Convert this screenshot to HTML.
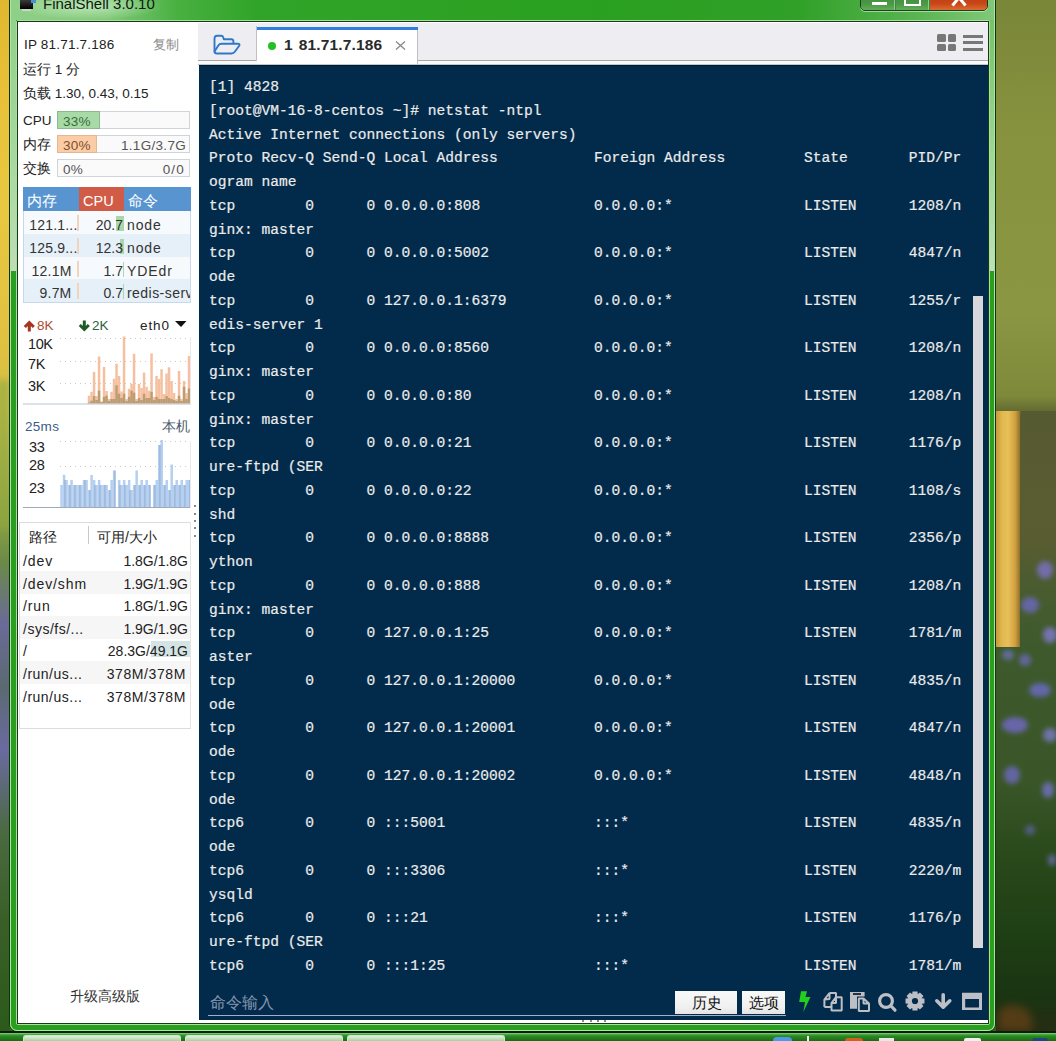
<!DOCTYPE html>
<html><head><meta charset="utf-8">
<style>
*{margin:0;padding:0;box-sizing:border-box}
html,body{width:1056px;height:1041px;overflow:hidden;position:relative;background:#3a5a2a;font-family:"Liberation Sans",sans-serif}
.a{position:absolute}
.t{position:absolute;white-space:nowrap;line-height:16px}
pre{position:absolute;left:209px;top:76px;font-family:"Liberation Mono",monospace;font-size:14.58px;line-height:23.75px;color:#ececec;white-space:pre;-webkit-text-stroke:0.2px #e8e8e8}
</style></head><body>
<div class="a" style="left:0;top:0;width:9px;height:1041px;background:linear-gradient(180deg,#e0b830 0%,#e8c038 8%,#e8c840 20%,#e0c040 34%,#c8c048 40%,#a8b048 45%,#8aa040 50%,#6a8a48 54%,#6a6a98 60%,#5a6a70 66%,#6a6aa0 72%,#4a6a40 80%,#3a6028 88%,#2a5a1a 100%)"></div>
<div class="a" style="left:996px;top:0;width:60px;height:1041px;background:linear-gradient(180deg,#7a8638 0%,#86923e 12%,#8a9642 30%,#7e8a3a 38%,#5c6030 40%,#585c30 52%,#4a5c30 56%,#3e5a2c 62%,#3a5628 75%,#2a4a1c 82%,#1e3e14 90%,#1a3412 96%,#2a2a12 100%)"></div>
<div class="a" style="left:1037px;top:561px;width:16px;height:18px;border-radius:50%;background:#7a70c0;filter:blur(2.5px);opacity:0.85"></div>
<div class="a" style="left:1021px;top:597px;width:18px;height:16px;border-radius:50%;background:#6a68b8;filter:blur(2.5px);opacity:0.85"></div>
<div class="a" style="left:1043px;top:627px;width:14px;height:16px;border-radius:50%;background:#8078c8;filter:blur(2.5px);opacity:0.85"></div>
<div class="a" style="left:1002px;top:650px;width:12px;height:10px;border-radius:50%;background:#6a70b0;filter:blur(2.5px);opacity:0.85"></div>
<div class="a" style="left:1029px;top:683px;width:22px;height:14px;border-radius:50%;background:#6a6ac0;filter:blur(2.5px);opacity:0.85"></div>
<div class="a" style="left:1002px;top:717px;width:26px;height:16px;border-radius:50%;background:#7068c0;filter:blur(2.5px);opacity:0.85"></div>
<div class="a" style="left:1043px;top:728px;width:14px;height:14px;border-radius:50%;background:#7a78c0;filter:blur(2.5px);opacity:0.85"></div>
<div class="a" style="left:1004px;top:766px;width:16px;height:18px;border-radius:50%;background:#6a68b8;filter:blur(2.5px);opacity:0.85"></div>
<div class="a" style="left:1042px;top:782px;width:12px;height:16px;border-radius:50%;background:#7070c0;filter:blur(2.5px);opacity:0.85"></div>
<div class="a" style="left:1019px;top:654px;width:12px;height:12px;border-radius:50%;background:#6a68b0;filter:blur(2.5px);opacity:0.85"></div>
<div class="a" style="left:1025px;top:825px;width:10px;height:10px;border-radius:50%;background:#5a6098;filter:blur(2.5px);opacity:0.85"></div>
<div class="a" style="left:1048px;top:854px;width:8px;height:12px;border-radius:50%;background:#6a68a8;filter:blur(2.5px);opacity:0.85"></div>
<div class="a" style="left:996px;top:411px;width:24px;height:236px;background:linear-gradient(90deg,#c89838 0%,#e0b850 25%,#e8c058 50%,#d0a040 80%,#907028 100%)"></div>
<div class="a" style="left:1021px;top:411px;width:35px;height:150px;background:linear-gradient(180deg,#565a30,#5a5c32 60%,rgba(80,90,48,0))"></div>
<div class="a" style="left:998px;top:1005px;width:34px;height:26px;border-radius:40% 60% 0 0;background:#6a4218;filter:blur(4px);opacity:0.7"></div>
<div class="a" style="left:-4px;top:380px;width:14px;height:150px;background:#90a840;filter:blur(3px);opacity:0.6"></div>
<div class="a" style="left:9px;top:-20px;width:987px;height:1052px;border:1px solid #123012;border-radius:0 0 8px 8px;background:#2a9e1e"></div>
<div class="a" style="left:10px;top:-20px;width:985px;height:1051px;border:1px solid #a8e8a0;border-top:none;border-radius:0 0 7px 7px"></div>
<div class="a" style="left:11px;top:0;width:5px;height:271px;background:linear-gradient(180deg,#8ed088 0%,#a8d8a0 60%,#c0dcb8 100%)"></div>
<div class="a" style="left:989px;top:0;width:5px;height:271px;background:linear-gradient(180deg,#70c060 0%,#a0d898 60%,#c0e0b8 100%)"></div>
<div class="a" style="left:11px;top:0;width:983px;height:20px;background:linear-gradient(90deg,#90d088 0%,#80c878 10%,#48b040 17%,#30a428 25%,#2aa020 60%,#30a028 80%,#58b450 92%,#80c878 100%)"></div>
<div class="a" style="left:14px;top:0;width:150px;height:20px;background:radial-gradient(ellipse at 50% 30%,rgba(230,255,230,0.55),rgba(230,255,230,0) 70%)"></div>
<div class="a" style="left:20px;top:0;width:13px;height:9px;background:linear-gradient(180deg,#3a3a3a,#000);"></div>
<div class="a" style="left:31px;top:0;width:5px;height:3px;background:#4a90d8"></div>
<div class="a" style="left:22px;top:9px;width:9px;height:2px;background:#c8d8c8"></div>
<div class="t" style="left:43px;top:-4px;font-size:15px;color:#101810;line-height:16px">FinalShell 3.0.10</div>
<div class="a" style="left:860px;top:-6px;width:128px;height:17px;border:1px solid #1e3e1e;border-radius:0 0 5px 5px;background:#3a8a3a;overflow:hidden;box-shadow:0 1px 0 rgba(200,255,200,0.6)"><div class="a" style="left:0;top:0;width:34px;height:16px;background:linear-gradient(180deg,#3e8a3a,#4c9a48 60%,#68b060);border-right:1px solid #90c890"></div><div class="a" style="left:35px;top:0;width:33px;height:16px;background:linear-gradient(180deg,#3e8a3a,#4c9a48 60%,#68b060);border-right:1px solid #90c890"></div><div class="a" style="left:69px;top:0;width:59px;height:16px;background:linear-gradient(180deg,#c03810,#c84818 55%,#e07038)"></div><div class="a" style="left:11px;top:7px;width:15px;height:3px;background:#fff"></div><div class="a" style="left:43px;top:0px;width:17px;height:11px;border:2.5px solid #fff;border-top:none"></div></div>
<svg class="a" style="left:945px;top:0" width="30" height="10"><path d="M7.5 5.5 L14 -2.5 M20.5 5.5 L14 -2.5" stroke="#fff" stroke-width="3" fill="none"/></svg>
<div class="a" style="left:16px;top:20px;width:974px;height:1005px;border:1px solid #a8e0a0;border-radius:2px"></div>
<div class="a" style="left:17px;top:21px;width:972px;height:1003px;border:1px solid #183818;background:#fff"></div>
<div class="t" style="left:24px;top:37px;font-size:13.5px;color:#222;letter-spacing:0.2px">IP 81.71.7.186</div>
<div class="t" style="left:153px;top:37px;font-size:13px;color:#8a8a8a;">复制</div>
<div class="t" style="left:23px;top:62px;font-size:13.5px;color:#222;">运行 1 分</div>
<div class="t" style="left:23px;top:86px;font-size:13.5px;color:#222;">负载 1.30, 0.43, 0.15</div>
<div class="t" style="left:23px;top:113px;font-size:13.5px;color:#222;">CPU</div>
<div class="a" style="left:57px;top:111px;width:133px;height:18px;border:1px solid #d0d4d8;background:#fafafa"></div><div class="a" style="left:57px;top:111px;width:43px;height:18px;background:#a8daa8;border:1px solid #90b890"></div><div class="t" style="left:63px;top:114px;font-size:13.5px;color:#3a6a3a;letter-spacing:0.2px">33%</div>
<div class="t" style="left:23px;top:137px;font-size:13.5px;color:#222;">内存</div>
<div class="a" style="left:57px;top:135px;width:133px;height:18px;border:1px solid #d0d4d8;background:#fafafa"></div><div class="a" style="left:57px;top:135px;width:40px;height:18px;background:#fccca4;border:1px solid #e0b898"></div><div class="t" style="left:63px;top:138px;font-size:13.5px;color:#7a5030;letter-spacing:0.2px">30%</div><div class="t" style="right:870px;top:138px;font-size:13.5px;color:#555;letter-spacing:0.3px">1.1G/3.7G</div>
<div class="t" style="left:23px;top:161px;font-size:13.5px;color:#222;">交换</div>
<div class="a" style="left:57px;top:159px;width:133px;height:18px;border:1px solid #d0d4d8;background:#fafafa"></div><div class="t" style="left:63px;top:162px;font-size:13.5px;color:#555;letter-spacing:0.2px">0%</div><div class="t" style="right:871px;top:162px;font-size:13.5px;color:#555;letter-spacing:1.2px">0/0</div>
<div class="a" style="left:23px;top:187px;width:168px;height:116px;border:1px solid #c8d8e8;background:#f6fafd"></div>
<div class="a" style="left:23px;top:187px;width:56px;height:24px;background:#5894d0"></div>
<div class="a" style="left:79px;top:187px;width:45px;height:24px;background:#d05c48"></div>
<div class="a" style="left:124px;top:187px;width:67px;height:24px;background:#5894d0"></div>
<div class="t" style="left:27px;top:193px;font-size:15px;color:#fff;">内存</div>
<div class="t" style="left:83px;top:193px;font-size:14.5px;color:#fff;">CPU</div>
<div class="t" style="left:128px;top:193px;font-size:15px;color:#fff;">命令</div>
<div class="a" style="left:77px;top:215px;width:1.5px;height:16px;background:#f2d4bc"></div>
<div class="a" style="left:116px;top:216px;width:8px;height:15px;background:#a8d8a8"></div>
<div class="t" style="right:978.5px;top:217px;font-size:14px;color:#333;letter-spacing:0.2px">121.1...</div>
<div class="t" style="right:933px;top:217px;font-size:14px;color:#333;">20.7</div>
<div class="t" style="left:127px;top:217px;width:63px;overflow:hidden;font-size:14px;color:#333;letter-spacing:0.9px">node</div>
<div class="a" style="left:24px;top:234px;width:166px;height:23px;background:#e6f0f8"></div>
<div class="a" style="left:77px;top:238px;width:1.5px;height:16px;background:#f2d4bc"></div>
<div class="a" style="left:120px;top:239px;width:4px;height:15px;background:#a8d8a8"></div>
<div class="t" style="right:978.5px;top:240px;font-size:14px;color:#333;letter-spacing:0.2px">125.9...</div>
<div class="t" style="right:933px;top:240px;font-size:14px;color:#333;">12.3</div>
<div class="t" style="left:127px;top:240px;width:63px;overflow:hidden;font-size:14px;color:#333;letter-spacing:0.9px">node</div>
<div class="a" style="left:77px;top:261px;width:1.5px;height:16px;background:#f2d4bc"></div>
<div class="a" style="left:123px;top:262px;width:1px;height:15px;background:#a8d8a8"></div>
<div class="t" style="right:984.5px;top:263px;font-size:14px;color:#333;letter-spacing:0.2px">12.1M</div>
<div class="t" style="right:933px;top:263px;font-size:14px;color:#333;">1.7</div>
<div class="t" style="left:127px;top:263px;width:63px;overflow:hidden;font-size:14px;color:#333;letter-spacing:0.9px">YDEdr</div>
<div class="a" style="left:24px;top:279px;width:166px;height:23px;background:#e6f0f8"></div>
<div class="a" style="left:77px;top:283px;width:1.5px;height:16px;background:#f2d4bc"></div>
<div class="a" style="left:123px;top:284px;width:1px;height:15px;background:#a8d8a8"></div>
<div class="t" style="right:984.5px;top:285px;font-size:14px;color:#333;letter-spacing:0.2px">9.7M</div>
<div class="t" style="right:933px;top:285px;font-size:14px;color:#333;">0.7</div>
<div class="t" style="left:127px;top:285px;width:63px;overflow:hidden;font-size:14px;color:#333;letter-spacing:0.45px">redis-serv</div>
<svg class="a" style="left:23px;top:320px" width="13" height="12"><path d="M6.3 11.5 L6.3 3 M1.8 7 L6.3 2.5 L10.8 7" fill="none" stroke="#a83420" stroke-width="3" stroke-linejoin="miter" stroke-linecap="butt"/></svg>
<div class="t" style="left:37px;top:318px;font-size:13.5px;color:#b04a30;">8K</div>
<svg class="a" style="left:78px;top:320px" width="13" height="12"><path d="M6.3 0.5 L6.3 9 M1.8 5 L6.3 9.5 L10.8 5" fill="none" stroke="#1e5a24" stroke-width="3" stroke-linejoin="miter" stroke-linecap="butt"/></svg>
<div class="t" style="left:92px;top:318px;font-size:13.5px;color:#2a6040;">2K</div>
<div class="t" style="left:140px;top:318px;font-size:13.5px;color:#222;letter-spacing:0.9px">eth0</div>
<svg class="a" style="left:175px;top:321px" width="12" height="7"><path d="M0 0 L11.5 0 L6 6 Z" fill="#111"/></svg>
<div class="t" style="left:28px;top:336px;font-size:14.5px;color:#222;letter-spacing:-0.4px">10K</div>
<div class="t" style="left:28px;top:356px;font-size:14.5px;color:#222;letter-spacing:-0.4px">7K</div>
<div class="t" style="left:28px;top:378px;font-size:14.5px;color:#222;letter-spacing:-0.4px">3K</div>
<svg class="a" style="left:0;top:0" width="200" height="530"><rect x="60" y="338" width="1" height="1" fill="#c8c8c8"/><rect x="60" y="361" width="1" height="1" fill="#c8c8c8"/><rect x="60" y="383" width="1" height="1" fill="#c8c8c8"/><rect x="65" y="338" width="1" height="1" fill="#c8c8c8"/><rect x="65" y="361" width="1" height="1" fill="#c8c8c8"/><rect x="65" y="383" width="1" height="1" fill="#c8c8c8"/><rect x="70" y="338" width="1" height="1" fill="#c8c8c8"/><rect x="70" y="361" width="1" height="1" fill="#c8c8c8"/><rect x="70" y="383" width="1" height="1" fill="#c8c8c8"/><rect x="75" y="338" width="1" height="1" fill="#c8c8c8"/><rect x="75" y="361" width="1" height="1" fill="#c8c8c8"/><rect x="75" y="383" width="1" height="1" fill="#c8c8c8"/><rect x="80" y="338" width="1" height="1" fill="#c8c8c8"/><rect x="80" y="361" width="1" height="1" fill="#c8c8c8"/><rect x="80" y="383" width="1" height="1" fill="#c8c8c8"/><rect x="85" y="338" width="1" height="1" fill="#c8c8c8"/><rect x="85" y="361" width="1" height="1" fill="#c8c8c8"/><rect x="85" y="383" width="1" height="1" fill="#c8c8c8"/><rect x="90" y="338" width="1" height="1" fill="#c8c8c8"/><rect x="90" y="361" width="1" height="1" fill="#c8c8c8"/><rect x="90" y="383" width="1" height="1" fill="#c8c8c8"/><rect x="95" y="338" width="1" height="1" fill="#c8c8c8"/><rect x="95" y="361" width="1" height="1" fill="#c8c8c8"/><rect x="95" y="383" width="1" height="1" fill="#c8c8c8"/><rect x="100" y="338" width="1" height="1" fill="#c8c8c8"/><rect x="100" y="361" width="1" height="1" fill="#c8c8c8"/><rect x="100" y="383" width="1" height="1" fill="#c8c8c8"/><rect x="105" y="338" width="1" height="1" fill="#c8c8c8"/><rect x="105" y="361" width="1" height="1" fill="#c8c8c8"/><rect x="105" y="383" width="1" height="1" fill="#c8c8c8"/><rect x="110" y="338" width="1" height="1" fill="#c8c8c8"/><rect x="110" y="361" width="1" height="1" fill="#c8c8c8"/><rect x="110" y="383" width="1" height="1" fill="#c8c8c8"/><rect x="115" y="338" width="1" height="1" fill="#c8c8c8"/><rect x="115" y="361" width="1" height="1" fill="#c8c8c8"/><rect x="115" y="383" width="1" height="1" fill="#c8c8c8"/><rect x="120" y="338" width="1" height="1" fill="#c8c8c8"/><rect x="120" y="361" width="1" height="1" fill="#c8c8c8"/><rect x="120" y="383" width="1" height="1" fill="#c8c8c8"/><rect x="125" y="338" width="1" height="1" fill="#c8c8c8"/><rect x="125" y="361" width="1" height="1" fill="#c8c8c8"/><rect x="125" y="383" width="1" height="1" fill="#c8c8c8"/><rect x="130" y="338" width="1" height="1" fill="#c8c8c8"/><rect x="130" y="361" width="1" height="1" fill="#c8c8c8"/><rect x="130" y="383" width="1" height="1" fill="#c8c8c8"/><rect x="135" y="338" width="1" height="1" fill="#c8c8c8"/><rect x="135" y="361" width="1" height="1" fill="#c8c8c8"/><rect x="135" y="383" width="1" height="1" fill="#c8c8c8"/><rect x="140" y="338" width="1" height="1" fill="#c8c8c8"/><rect x="140" y="361" width="1" height="1" fill="#c8c8c8"/><rect x="140" y="383" width="1" height="1" fill="#c8c8c8"/><rect x="145" y="338" width="1" height="1" fill="#c8c8c8"/><rect x="145" y="361" width="1" height="1" fill="#c8c8c8"/><rect x="145" y="383" width="1" height="1" fill="#c8c8c8"/><rect x="150" y="338" width="1" height="1" fill="#c8c8c8"/><rect x="150" y="361" width="1" height="1" fill="#c8c8c8"/><rect x="150" y="383" width="1" height="1" fill="#c8c8c8"/><rect x="155" y="338" width="1" height="1" fill="#c8c8c8"/><rect x="155" y="361" width="1" height="1" fill="#c8c8c8"/><rect x="155" y="383" width="1" height="1" fill="#c8c8c8"/><rect x="160" y="338" width="1" height="1" fill="#c8c8c8"/><rect x="160" y="361" width="1" height="1" fill="#c8c8c8"/><rect x="160" y="383" width="1" height="1" fill="#c8c8c8"/><rect x="165" y="338" width="1" height="1" fill="#c8c8c8"/><rect x="165" y="361" width="1" height="1" fill="#c8c8c8"/><rect x="165" y="383" width="1" height="1" fill="#c8c8c8"/><rect x="170" y="338" width="1" height="1" fill="#c8c8c8"/><rect x="170" y="361" width="1" height="1" fill="#c8c8c8"/><rect x="170" y="383" width="1" height="1" fill="#c8c8c8"/><rect x="175" y="338" width="1" height="1" fill="#c8c8c8"/><rect x="175" y="361" width="1" height="1" fill="#c8c8c8"/><rect x="175" y="383" width="1" height="1" fill="#c8c8c8"/><rect x="180" y="338" width="1" height="1" fill="#c8c8c8"/><rect x="180" y="361" width="1" height="1" fill="#c8c8c8"/><rect x="180" y="383" width="1" height="1" fill="#c8c8c8"/><rect x="185" y="338" width="1" height="1" fill="#c8c8c8"/><rect x="185" y="361" width="1" height="1" fill="#c8c8c8"/><rect x="185" y="383" width="1" height="1" fill="#c8c8c8"/><rect x="190" y="338" width="1" height="1" fill="#c8c8c8"/><rect x="190" y="361" width="1" height="1" fill="#c8c8c8"/><rect x="190" y="383" width="1" height="1" fill="#c8c8c8"/><rect x="60" y="441" width="1" height="1" fill="#c8c8c8"/><rect x="60" y="466" width="1" height="1" fill="#c8c8c8"/><rect x="65" y="441" width="1" height="1" fill="#c8c8c8"/><rect x="65" y="466" width="1" height="1" fill="#c8c8c8"/><rect x="70" y="441" width="1" height="1" fill="#c8c8c8"/><rect x="70" y="466" width="1" height="1" fill="#c8c8c8"/><rect x="75" y="441" width="1" height="1" fill="#c8c8c8"/><rect x="75" y="466" width="1" height="1" fill="#c8c8c8"/><rect x="80" y="441" width="1" height="1" fill="#c8c8c8"/><rect x="80" y="466" width="1" height="1" fill="#c8c8c8"/><rect x="85" y="441" width="1" height="1" fill="#c8c8c8"/><rect x="85" y="466" width="1" height="1" fill="#c8c8c8"/><rect x="90" y="441" width="1" height="1" fill="#c8c8c8"/><rect x="90" y="466" width="1" height="1" fill="#c8c8c8"/><rect x="95" y="441" width="1" height="1" fill="#c8c8c8"/><rect x="95" y="466" width="1" height="1" fill="#c8c8c8"/><rect x="100" y="441" width="1" height="1" fill="#c8c8c8"/><rect x="100" y="466" width="1" height="1" fill="#c8c8c8"/><rect x="105" y="441" width="1" height="1" fill="#c8c8c8"/><rect x="105" y="466" width="1" height="1" fill="#c8c8c8"/><rect x="110" y="441" width="1" height="1" fill="#c8c8c8"/><rect x="110" y="466" width="1" height="1" fill="#c8c8c8"/><rect x="115" y="441" width="1" height="1" fill="#c8c8c8"/><rect x="115" y="466" width="1" height="1" fill="#c8c8c8"/><rect x="120" y="441" width="1" height="1" fill="#c8c8c8"/><rect x="120" y="466" width="1" height="1" fill="#c8c8c8"/><rect x="125" y="441" width="1" height="1" fill="#c8c8c8"/><rect x="125" y="466" width="1" height="1" fill="#c8c8c8"/><rect x="130" y="441" width="1" height="1" fill="#c8c8c8"/><rect x="130" y="466" width="1" height="1" fill="#c8c8c8"/><rect x="135" y="441" width="1" height="1" fill="#c8c8c8"/><rect x="135" y="466" width="1" height="1" fill="#c8c8c8"/><rect x="140" y="441" width="1" height="1" fill="#c8c8c8"/><rect x="140" y="466" width="1" height="1" fill="#c8c8c8"/><rect x="145" y="441" width="1" height="1" fill="#c8c8c8"/><rect x="145" y="466" width="1" height="1" fill="#c8c8c8"/><rect x="150" y="441" width="1" height="1" fill="#c8c8c8"/><rect x="150" y="466" width="1" height="1" fill="#c8c8c8"/><rect x="155" y="441" width="1" height="1" fill="#c8c8c8"/><rect x="155" y="466" width="1" height="1" fill="#c8c8c8"/><rect x="160" y="441" width="1" height="1" fill="#c8c8c8"/><rect x="160" y="466" width="1" height="1" fill="#c8c8c8"/><rect x="165" y="441" width="1" height="1" fill="#c8c8c8"/><rect x="165" y="466" width="1" height="1" fill="#c8c8c8"/><rect x="170" y="441" width="1" height="1" fill="#c8c8c8"/><rect x="170" y="466" width="1" height="1" fill="#c8c8c8"/><rect x="175" y="441" width="1" height="1" fill="#c8c8c8"/><rect x="175" y="466" width="1" height="1" fill="#c8c8c8"/><rect x="180" y="441" width="1" height="1" fill="#c8c8c8"/><rect x="180" y="466" width="1" height="1" fill="#c8c8c8"/><rect x="185" y="441" width="1" height="1" fill="#c8c8c8"/><rect x="185" y="466" width="1" height="1" fill="#c8c8c8"/><rect x="190" y="441" width="1" height="1" fill="#c8c8c8"/><rect x="190" y="466" width="1" height="1" fill="#c8c8c8"/><rect x="87.80" y="395.7" width="2.5" height="7.8" fill="#f6c0a0"/><rect x="90.30" y="391.8" width="2.5" height="11.7" fill="#f6c0a0"/><rect x="92.80" y="371.9" width="2.5" height="31.6" fill="#f6c0a0"/><rect x="95.30" y="396" width="2.5" height="7.5" fill="#f6c0a0"/><rect x="97.80" y="356.5" width="2.5" height="47.0" fill="#f6c0a0"/><rect x="100.30" y="401.5" width="2.5" height="2.0" fill="#f6c0a0"/><rect x="102.80" y="366.9" width="2.5" height="36.6" fill="#f6c0a0"/><rect x="105.30" y="391" width="2.5" height="12.5" fill="#f6c0a0"/><rect x="107.80" y="399" width="2.5" height="4.5" fill="#f6c0a0"/><rect x="110.30" y="391.8" width="2.5" height="11.7" fill="#f6c0a0"/><rect x="112.80" y="378.8" width="2.5" height="24.7" fill="#f6c0a0"/><rect x="115.30" y="363.8" width="2.5" height="39.7" fill="#f6c0a0"/><rect x="117.80" y="376" width="2.5" height="27.5" fill="#f6c0a0"/><rect x="120.30" y="391.4" width="2.5" height="12.1" fill="#f6c0a0"/><rect x="122.80" y="336.5" width="2.5" height="67.0" fill="#f6c0a0"/><rect x="125.30" y="399" width="2.5" height="4.5" fill="#f6c0a0"/><rect x="127.80" y="388.8" width="2.5" height="14.7" fill="#f6c0a0"/><rect x="130.30" y="383.8" width="2.5" height="19.7" fill="#f6c0a0"/><rect x="132.80" y="353.8" width="2.5" height="49.7" fill="#f6c0a0"/><rect x="135.30" y="399" width="2.5" height="4.5" fill="#f6c0a0"/><rect x="137.80" y="384" width="2.5" height="19.5" fill="#f6c0a0"/><rect x="140.30" y="388" width="2.5" height="15.5" fill="#f6c0a0"/><rect x="142.80" y="372.6" width="2.5" height="30.9" fill="#f6c0a0"/><rect x="145.30" y="386.8" width="2.5" height="16.7" fill="#f6c0a0"/><rect x="147.80" y="390.7" width="2.5" height="12.8" fill="#f6c0a0"/><rect x="150.30" y="353.4" width="2.5" height="50.1" fill="#f6c0a0"/><rect x="152.80" y="397" width="2.5" height="6.5" fill="#f6c0a0"/><rect x="155.30" y="376" width="2.5" height="27.5" fill="#f6c0a0"/><rect x="157.80" y="379" width="2.5" height="24.5" fill="#f6c0a0"/><rect x="160.30" y="369.2" width="2.5" height="34.3" fill="#f6c0a0"/><rect x="162.80" y="394" width="2.5" height="9.5" fill="#f6c0a0"/><rect x="165.30" y="373.4" width="2.5" height="30.1" fill="#f6c0a0"/><rect x="167.80" y="367.3" width="2.5" height="36.2" fill="#f6c0a0"/><rect x="170.30" y="381" width="2.5" height="22.5" fill="#f6c0a0"/><rect x="172.80" y="393" width="2.5" height="10.5" fill="#f6c0a0"/><rect x="175.30" y="399" width="2.5" height="4.5" fill="#f6c0a0"/><rect x="177.80" y="371" width="2.5" height="32.5" fill="#f6c0a0"/><rect x="180.30" y="399" width="2.5" height="4.5" fill="#f6c0a0"/><rect x="182.80" y="381" width="2.5" height="22.5" fill="#f6c0a0"/><rect x="185.30" y="393" width="2.5" height="10.5" fill="#f6c0a0"/><rect x="187.80" y="356" width="2.5" height="47.5" fill="#f6c0a0"/><rect x="87.80" y="402.6" width="2.5" height="0.9" fill="#a89060" fill-opacity="0.75"/><rect x="90.30" y="400.7" width="2.5" height="2.8" fill="#a89060" fill-opacity="0.75"/><rect x="92.80" y="396" width="2.5" height="7.5" fill="#a89060" fill-opacity="0.75"/><rect x="95.30" y="400" width="2.5" height="3.5" fill="#a89060" fill-opacity="0.75"/><rect x="97.80" y="390.7" width="2.5" height="12.8" fill="#a89060" fill-opacity="0.75"/><rect x="100.30" y="402" width="2.5" height="1.5" fill="#a89060" fill-opacity="0.75"/><rect x="102.80" y="396.8" width="2.5" height="6.7" fill="#a89060" fill-opacity="0.75"/><rect x="105.30" y="395.7" width="2.5" height="7.8" fill="#a89060" fill-opacity="0.75"/><rect x="107.80" y="401" width="2.5" height="2.5" fill="#a89060" fill-opacity="0.75"/><rect x="110.30" y="399" width="2.5" height="4.5" fill="#a89060" fill-opacity="0.75"/><rect x="112.80" y="399" width="2.5" height="4.5" fill="#a89060" fill-opacity="0.75"/><rect x="115.30" y="385.3" width="2.5" height="18.2" fill="#a89060" fill-opacity="0.75"/><rect x="117.80" y="393.7" width="2.5" height="9.8" fill="#a89060" fill-opacity="0.75"/><rect x="120.30" y="398" width="2.5" height="5.5" fill="#a89060" fill-opacity="0.75"/><rect x="122.80" y="393.7" width="2.5" height="9.8" fill="#a89060" fill-opacity="0.75"/><rect x="125.30" y="401" width="2.5" height="2.5" fill="#a89060" fill-opacity="0.75"/><rect x="127.80" y="396.8" width="2.5" height="6.7" fill="#a89060" fill-opacity="0.75"/><rect x="130.30" y="390.7" width="2.5" height="12.8" fill="#a89060" fill-opacity="0.75"/><rect x="132.80" y="392.6" width="2.5" height="10.9" fill="#a89060" fill-opacity="0.75"/><rect x="135.30" y="401" width="2.5" height="2.5" fill="#a89060" fill-opacity="0.75"/><rect x="137.80" y="398" width="2.5" height="5.5" fill="#a89060" fill-opacity="0.75"/><rect x="140.30" y="400" width="2.5" height="3.5" fill="#a89060" fill-opacity="0.75"/><rect x="142.80" y="393.7" width="2.5" height="9.8" fill="#a89060" fill-opacity="0.75"/><rect x="145.30" y="398" width="2.5" height="5.5" fill="#a89060" fill-opacity="0.75"/><rect x="147.80" y="398" width="2.5" height="5.5" fill="#a89060" fill-opacity="0.75"/><rect x="150.30" y="391.8" width="2.5" height="11.7" fill="#a89060" fill-opacity="0.75"/><rect x="152.80" y="400" width="2.5" height="3.5" fill="#a89060" fill-opacity="0.75"/><rect x="155.30" y="396.8" width="2.5" height="6.7" fill="#a89060" fill-opacity="0.75"/><rect x="157.80" y="399" width="2.5" height="4.5" fill="#a89060" fill-opacity="0.75"/><rect x="160.30" y="399" width="2.5" height="4.5" fill="#a89060" fill-opacity="0.75"/><rect x="162.80" y="399" width="2.5" height="4.5" fill="#a89060" fill-opacity="0.75"/><rect x="165.30" y="396" width="2.5" height="7.5" fill="#a89060" fill-opacity="0.75"/><rect x="167.80" y="398" width="2.5" height="5.5" fill="#a89060" fill-opacity="0.75"/><rect x="170.30" y="399" width="2.5" height="4.5" fill="#a89060" fill-opacity="0.75"/><rect x="172.80" y="400" width="2.5" height="3.5" fill="#a89060" fill-opacity="0.75"/><rect x="175.30" y="401" width="2.5" height="2.5" fill="#a89060" fill-opacity="0.75"/><rect x="177.80" y="395.7" width="2.5" height="7.8" fill="#a89060" fill-opacity="0.75"/><rect x="180.30" y="401" width="2.5" height="2.5" fill="#a89060" fill-opacity="0.75"/><rect x="182.80" y="386.8" width="2.5" height="16.7" fill="#a89060" fill-opacity="0.75"/><rect x="185.30" y="399" width="2.5" height="4.5" fill="#a89060" fill-opacity="0.75"/><rect x="187.80" y="388.4" width="2.5" height="15.1" fill="#a89060" fill-opacity="0.75"/><rect x="60.30" y="485" width="2.50" height="22.0" fill="#b4cff0"/><rect x="62.80" y="474.8" width="2.50" height="32.2" fill="#b4cff0"/><rect x="65.31" y="480" width="2.50" height="27.0" fill="#b4cff0"/><rect x="67.81" y="485" width="2.50" height="22.0" fill="#b4cff0"/><rect x="70.32" y="480" width="2.50" height="27.0" fill="#b4cff0"/><rect x="72.82" y="485" width="2.50" height="22.0" fill="#b4cff0"/><rect x="75.32" y="485" width="2.50" height="22.0" fill="#b4cff0"/><rect x="77.83" y="485" width="2.50" height="22.0" fill="#b4cff0"/><rect x="80.33" y="485" width="2.50" height="22.0" fill="#b4cff0"/><rect x="82.83" y="480" width="2.50" height="27.0" fill="#b4cff0"/><rect x="85.34" y="480" width="2.50" height="27.0" fill="#b4cff0"/><rect x="87.84" y="490" width="2.50" height="17.0" fill="#b4cff0"/><rect x="90.35" y="475" width="2.50" height="32.0" fill="#b4cff0"/><rect x="92.85" y="480" width="2.50" height="27.0" fill="#b4cff0"/><rect x="95.35" y="485" width="2.50" height="22.0" fill="#b4cff0"/><rect x="97.86" y="480" width="2.50" height="27.0" fill="#b4cff0"/><rect x="100.36" y="485" width="2.50" height="22.0" fill="#b4cff0"/><rect x="102.87" y="485" width="2.50" height="22.0" fill="#b4cff0"/><rect x="105.37" y="485" width="2.50" height="22.0" fill="#b4cff0"/><rect x="107.87" y="490" width="2.50" height="17.0" fill="#b4cff0"/><rect x="110.38" y="480" width="2.50" height="27.0" fill="#b4cff0"/><rect x="112.88" y="470.5" width="2.50" height="36.5" fill="#b4cff0"/><rect x="117.89" y="480" width="2.50" height="27.0" fill="#b4cff0"/><rect x="120.39" y="485" width="2.50" height="22.0" fill="#b4cff0"/><rect x="122.90" y="480" width="2.50" height="27.0" fill="#b4cff0"/><rect x="125.40" y="485" width="2.50" height="22.0" fill="#b4cff0"/><rect x="127.90" y="480" width="2.50" height="27.0" fill="#b4cff0"/><rect x="130.41" y="490" width="2.50" height="17.0" fill="#b4cff0"/><rect x="132.91" y="485" width="2.50" height="22.0" fill="#b4cff0"/><rect x="135.42" y="470.5" width="2.50" height="36.5" fill="#b4cff0"/><rect x="137.92" y="485" width="2.50" height="22.0" fill="#b4cff0"/><rect x="140.42" y="480" width="2.50" height="27.0" fill="#b4cff0"/><rect x="142.93" y="485" width="2.50" height="22.0" fill="#b4cff0"/><rect x="145.43" y="480" width="2.50" height="27.0" fill="#b4cff0"/><rect x="147.93" y="485" width="2.50" height="22.0" fill="#b4cff0"/><rect x="152.94" y="485" width="2.50" height="22.0" fill="#b4cff0"/><rect x="155.45" y="480" width="2.50" height="27.0" fill="#b4cff0"/><rect x="157.95" y="445" width="2.50" height="62.0" fill="#b4cff0"/><rect x="160.45" y="440" width="2.50" height="67.0" fill="#b4cff0"/><rect x="162.96" y="485" width="2.50" height="22.0" fill="#b4cff0"/><rect x="165.46" y="480" width="2.50" height="27.0" fill="#b4cff0"/><rect x="167.97" y="490" width="2.50" height="17.0" fill="#b4cff0"/><rect x="170.47" y="464.5" width="2.50" height="42.5" fill="#b4cff0"/><rect x="172.97" y="485" width="2.50" height="22.0" fill="#b4cff0"/><rect x="175.48" y="480" width="2.50" height="27.0" fill="#b4cff0"/><rect x="177.98" y="485" width="2.50" height="22.0" fill="#b4cff0"/><rect x="180.48" y="480" width="2.50" height="27.0" fill="#b4cff0"/><rect x="182.99" y="485" width="2.50" height="22.0" fill="#b4cff0"/><rect x="185.49" y="480" width="2.50" height="27.0" fill="#b4cff0"/><rect x="188.00" y="480" width="2.50" height="27.0" fill="#b4cff0"/><rect x="64.5" y="480" width="1" height="27.0" fill="#8aa8d0"/><rect x="69.5" y="485" width="1" height="22.0" fill="#8aa8d0"/><rect x="74.5" y="485" width="1" height="22.0" fill="#8aa8d0"/><rect x="79.5" y="485" width="1" height="22.0" fill="#8aa8d0"/><rect x="84.5" y="480" width="1" height="27.0" fill="#8aa8d0"/><rect x="89.5" y="490" width="1" height="17.0" fill="#8aa8d0"/><rect x="94.5" y="485" width="1" height="22.0" fill="#8aa8d0"/><rect x="99.5" y="485" width="1" height="22.0" fill="#8aa8d0"/><rect x="104.5" y="485" width="1" height="22.0" fill="#8aa8d0"/><rect x="109.5" y="490" width="1" height="17.0" fill="#8aa8d0"/><rect x="114.5" y="470.5" width="1" height="36.5" fill="#8aa8d0"/><rect x="119.5" y="485" width="1" height="22.0" fill="#8aa8d0"/><rect x="124.5" y="485" width="1" height="22.0" fill="#8aa8d0"/><rect x="129.5" y="490" width="1" height="17.0" fill="#8aa8d0"/><rect x="134.5" y="485" width="1" height="22.0" fill="#8aa8d0"/><rect x="139.5" y="485" width="1" height="22.0" fill="#8aa8d0"/><rect x="144.5" y="485" width="1" height="22.0" fill="#8aa8d0"/><rect x="149.5" y="485" width="1" height="22.0" fill="#8aa8d0"/><rect x="154.5" y="485" width="1" height="22.0" fill="#8aa8d0"/><rect x="159.5" y="445" width="1" height="62.0" fill="#8aa8d0"/><rect x="164.5" y="485" width="1" height="22.0" fill="#8aa8d0"/><rect x="169.5" y="490" width="1" height="17.0" fill="#8aa8d0"/><rect x="174.5" y="485" width="1" height="22.0" fill="#8aa8d0"/><rect x="179.5" y="485" width="1" height="22.0" fill="#8aa8d0"/><rect x="184.5" y="485" width="1" height="22.0" fill="#8aa8d0"/><rect x="189.5" y="480" width="1" height="27.0" fill="#8aa8d0"/><rect x="23" y="403.5" width="168" height="1" fill="#b8c4d0"/><rect x="23" y="507" width="168" height="1" fill="#a0aab8"/><rect x="190" y="337" width="1" height="67" fill="#e8e8ee"/><rect x="190" y="441" width="1" height="67" fill="#e8e8ee"/></svg>
<div class="t" style="left:25px;top:419px;font-size:13.5px;color:#3a6088;letter-spacing:0.3px">25ms</div>
<div class="t" style="right:866px;top:419px;font-size:13.5px;color:#4a5a6a;">本机</div>
<div class="t" style="left:29px;top:439px;font-size:14.5px;color:#222;letter-spacing:-0.4px">33</div>
<div class="t" style="left:29px;top:457px;font-size:14.5px;color:#222;letter-spacing:-0.4px">28</div>
<div class="t" style="left:29px;top:480px;font-size:14.5px;color:#222;letter-spacing:-0.4px">23</div>
<div class="a" style="left:19px;top:522px;width:172px;height:207px;border:1px solid #dcdcdc;border-right-color:#e4e4e4;background:#fff"></div>
<div class="t" style="left:29px;top:529px;font-size:14px;color:#222;">路径</div>
<div class="a" style="left:88px;top:526px;width:1px;height:18px;background:#c8c8c8"></div>
<div class="t" style="left:97px;top:529px;font-size:14px;color:#222;">可用/大小</div>
<div class="t" style="left:23px;top:553px;font-size:14px;color:#222;letter-spacing:0.9px">/dev</div>
<div class="t" style="right:868px;top:553px;font-size:14px;color:#222;letter-spacing:0px">1.8G/1.8G</div>
<div class="a" style="left:20px;top:571px;width:170px;height:23px;background:#f6f6f6"></div>
<div class="t" style="left:23px;top:576px;font-size:14px;color:#222;letter-spacing:0.9px">/dev/shm</div>
<div class="t" style="right:868px;top:576px;font-size:14px;color:#222;letter-spacing:0px">1.9G/1.9G</div>
<div class="t" style="left:23px;top:598px;font-size:14px;color:#222;letter-spacing:0.9px">/run</div>
<div class="t" style="right:868px;top:598px;font-size:14px;color:#222;letter-spacing:0px">1.8G/1.9G</div>
<div class="a" style="left:20px;top:616px;width:170px;height:23px;background:#f6f6f6"></div>
<div class="t" style="left:23px;top:621px;font-size:14px;color:#222;letter-spacing:0.5px">/sys/fs/...</div>
<div class="t" style="right:868px;top:621px;font-size:14px;color:#222;letter-spacing:0px">1.9G/1.9G</div>
<div class="a" style="left:151px;top:641px;width:39px;height:16px;background:#d4e4e4"></div>
<div class="t" style="left:23px;top:643px;font-size:14px;color:#222;letter-spacing:0.9px">/</div>
<div class="t" style="right:868px;top:643px;font-size:14px;color:#222;letter-spacing:0px">28.3G/49.1G</div>
<div class="a" style="left:20px;top:661px;width:170px;height:23px;background:#f6f6f6"></div>
<div class="t" style="left:23px;top:666px;font-size:14px;color:#222;letter-spacing:0.5px">/run/us...</div>
<div class="t" style="right:870px;top:666px;font-size:14px;color:#222;letter-spacing:0.6px">378M/378M</div>
<div class="t" style="left:23px;top:689px;font-size:14px;color:#222;letter-spacing:0.5px">/run/us...</div>
<div class="t" style="right:870px;top:689px;font-size:14px;color:#222;letter-spacing:0.6px">378M/378M</div>
<div class="t" style="left:70px;top:988px;font-size:14px;color:#333;">升级高级版</div>
<div class="a" style="left:194px;top:505px;width:2px;height:2px;background:#888"></div>
<div class="a" style="left:194px;top:513px;width:2px;height:2px;background:#888"></div>
<div class="a" style="left:194px;top:520px;width:2px;height:2px;background:#888"></div>
<div class="a" style="left:194px;top:527px;width:2px;height:2px;background:#888"></div>
<div class="a" style="left:194px;top:535px;width:2px;height:2px;background:#888"></div>
<div class="a" style="left:198px;top:23px;width:790px;height:38px;background:#eeeef2;border-bottom:1px solid #a8a8a8"></div>
<div class="a" style="left:198px;top:61px;width:790px;height:3px;background:#fafafa"></div>
<div class="a" style="left:198px;top:64px;width:790px;height:1px;background:#c0c8d0"></div>
<div class="a" style="left:256px;top:26px;width:1px;height:35px;background:#c0c0c0"></div>
<div class="a" style="left:257px;top:27px;width:161px;height:37px;background:#fff;border-right:1px solid #c0c0c0"></div>
<div class="a" style="left:257px;top:27px;width:161px;height:3px;background:#2f7ee0"></div>
<div class="a" style="left:268px;top:42px;width:8px;height:8px;border-radius:50%;background:#22c022"></div>
<div class="t" style="left:284px;top:36.5px;font-size:15.5px;color:#2a2a2a;font-weight:bold;letter-spacing:0.15px;word-spacing:1.5px">1 81.71.7.186</div>
<svg class="a" style="left:395px;top:41px" width="11" height="9"><path d="M1 0.5 L10 8.5 M10 0.5 L1 8.5" stroke="#888" stroke-width="1.3"/></svg>
<svg class="a" style="left:212px;top:34px" width="30" height="22"><path d="M2.5 18 L2.5 4.5 Q2.5 1.8 5 1.8 L9.2 1.8 Q10.8 1.8 11.3 3.5 L11.8 5.3 L19.2 5.3 Q21.4 5.3 21.4 7.5 L21.4 9.5" fill="none" stroke="#2f78c8" stroke-width="1.9" stroke-linejoin="round"/><path d="M2.5 17.5 L6.5 11.3 Q7.5 9.7 9.5 9.7 L25.8 9.7 Q28.3 9.7 27.2 11.8 L22.8 17.8 Q21.6 19.5 19.6 19.5 L5 19.5 Q2.5 19.5 2.5 17.5" fill="none" stroke="#2f78c8" stroke-width="1.9" stroke-linejoin="round"/></svg>
<div class="a" style="left:937px;top:34px;width:8.5px;height:7.5px;border-radius:1.5px;background:#777"></div>
<div class="a" style="left:947.5px;top:34px;width:8.5px;height:7.5px;border-radius:1.5px;background:#777"></div>
<div class="a" style="left:937px;top:43.5px;width:8.5px;height:7.5px;border-radius:1.5px;background:#777"></div>
<div class="a" style="left:947.5px;top:43.5px;width:8.5px;height:7.5px;border-radius:1.5px;background:#777"></div>
<div class="a" style="left:963px;top:35px;width:20px;height:3px;background:#777"></div>
<div class="a" style="left:963px;top:41.3px;width:20px;height:3px;background:#777"></div>
<div class="a" style="left:963px;top:48px;width:20px;height:3px;background:#777"></div>
<div class="a" style="left:199px;top:65px;width:789px;height:955px;background:#022a4a;border-top:1px solid #021a30"></div>
<div class="a" style="left:199px;top:1020px;width:789px;height:3px;background:#fff"></div>
<pre>[1] 4828
[root@VM-16-8-centos ~]# netstat -ntpl
Active Internet connections (only servers)
Proto Recv-Q Send-Q Local Address           Foreign Address         State       PID/Pr
ogram name
tcp        0      0 0.0.0.0:808             0.0.0.0:*               LISTEN      1208/n
ginx: master
tcp        0      0 0.0.0.0:5002            0.0.0.0:*               LISTEN      4847/n
ode
tcp        0      0 127.0.0.1:6379          0.0.0.0:*               LISTEN      1255/r
edis-server 1
tcp        0      0 0.0.0.0:8560            0.0.0.0:*               LISTEN      1208/n
ginx: master
tcp        0      0 0.0.0.0:80              0.0.0.0:*               LISTEN      1208/n
ginx: master
tcp        0      0 0.0.0.0:21              0.0.0.0:*               LISTEN      1176/p
ure-ftpd (SER
tcp        0      0 0.0.0.0:22              0.0.0.0:*               LISTEN      1108/s
shd
tcp        0      0 0.0.0.0:8888            0.0.0.0:*               LISTEN      2356/p
ython
tcp        0      0 0.0.0.0:888             0.0.0.0:*               LISTEN      1208/n
ginx: master
tcp        0      0 127.0.0.1:25            0.0.0.0:*               LISTEN      1781/m
aster
tcp        0      0 127.0.0.1:20000         0.0.0.0:*               LISTEN      4835/n
ode
tcp        0      0 127.0.0.1:20001         0.0.0.0:*               LISTEN      4847/n
ode
tcp        0      0 127.0.0.1:20002         0.0.0.0:*               LISTEN      4848/n
ode
tcp6       0      0 :::5001                 :::*                    LISTEN      4835/n
ode
tcp6       0      0 :::3306                 :::*                    LISTEN      2220/m
ysqld
tcp6       0      0 :::21                   :::*                    LISTEN      1176/p
ure-ftpd (SER
tcp6       0      0 :::1:25                 :::*                    LISTEN      1781/m</pre>
<div class="a" style="left:582px;top:1020px;width:2px;height:2px;background:#8a8a8a"></div>
<div class="a" style="left:590px;top:1020px;width:2px;height:2px;background:#8a8a8a"></div>
<div class="a" style="left:597px;top:1020px;width:2px;height:2px;background:#8a8a8a"></div>
<div class="a" style="left:604px;top:1020px;width:2px;height:2px;background:#8a8a8a"></div>
<div class="a" style="left:973px;top:296px;width:10px;height:652px;background:#d8d8dc"></div>
<div class="t" style="left:210px;top:995px;font-size:16px;color:#8496b0;">命令输入</div>
<div class="a" style="left:208px;top:1015px;width:578px;height:1px;background:#a0b0cc"></div>
<div class="a" style="left:675px;top:991px;width:62px;height:23px;background:linear-gradient(180deg,#f8f8f8,#f0f0f0 70%,#e4e4e4)"></div>
<div class="t" style="left:692px;top:995px;font-size:15px;color:#111;">历史</div>
<div class="a" style="left:742px;top:991px;width:43px;height:23px;background:linear-gradient(180deg,#f8f8f8,#f0f0f0 70%,#e4e4e4)"></div>
<div class="t" style="left:749px;top:995px;font-size:15px;color:#111;">选项</div>
<svg class="a" style="left:0;top:0" width="1056" height="1041"><path d="M801 991.2 L807 991.2 L805.5 997 L810.5 997 L803.3 1012 L805 1002 L799.2 1002 Z" fill="#22d022"/><path d="M829.5 993 L836 993 L836 998 M824.4 1007 L824.4 999.5 L829.5 993 L829.5 999 L824.4 999.5" fill="none" stroke="#bcbfc6" stroke-width="2" stroke-linejoin="bevel"/><path d="M824.4 1007 L831 1007" fill="none" stroke="#bcbfc6" stroke-width="2"/><path d="M836 997.2 L841.7 997.2 L841.7 1010.6 L831.5 1010.6 L831.5 1003 Z M836 997.2 L836 1003 L831.5 1003" fill="none" stroke="#bcbfc6" stroke-width="2" stroke-linejoin="bevel"/><path d="M850 992 L864.6 992 L864.6 996.5 L857 996.5 L857 1008.7 L850 1008.7 Z" fill="#bcbfc6"/><rect x="853" y="993" width="8" height="2" fill="#2a3040"/><path d="M858.8 998.4 L863.5 998.4 L869 1003.5 L869 1010.9 L858.8 1010.9 Z M863.5 998.4 L863.5 1003.5 L869 1003.5" fill="none" stroke="#bcbfc6" stroke-width="2" stroke-linejoin="bevel"/><circle cx="886" cy="1001" r="6.4" fill="none" stroke="#bcbfc6" stroke-width="3.2"/><path d="M891 1006 L895 1010.2" stroke="#bcbfc6" stroke-width="3.2" stroke-linecap="round"/><path d="M943.2 994.8 L943.2 1006 M936.8 1000.8 L943.2 1007.2 L949.8 1000.8" fill="none" stroke="#bcbfc6" stroke-width="3.6" stroke-linecap="round" stroke-linejoin="round"/><path d="M962 992.8 L982 992.8 L982 1010.1 L962 1010.1 Z M965.2 999 L965.2 1007.6 L979 1007.6 L979 999 Z" fill="#bcbfc6" fill-rule="evenodd"/><polygon points="912.48,991.53 917.52,991.53 917.80,994.37 917.71,994.33 919.92,992.52 923.48,996.08 921.67,998.29 921.63,998.20 924.47,998.48 924.47,1003.52 921.63,1003.80 921.67,1003.71 923.48,1005.92 919.92,1009.48 917.71,1007.67 917.80,1007.63 917.52,1010.47 912.48,1010.47 912.20,1007.63 912.29,1007.67 910.08,1009.48 906.52,1005.92 908.33,1003.71 908.37,1003.80 905.53,1003.52 905.53,998.48 908.37,998.20 908.33,998.29 906.52,996.08 910.08,992.52 912.29,994.33 912.20,994.37" fill="#bcbfc6"/><circle cx="915" cy="1001" r="3.1" fill="#022a4a"/></svg>
<div class="a" style="left:0;top:1031px;width:1056px;height:2px;background:#0a200a"></div>
<div class="a" style="left:0;top:1033px;width:1056px;height:8px;background:linear-gradient(180deg,#90d888 0px,#58b050 1px,#2a8a22 3px,#1a6a14 8px)"></div>
<div class="a" style="left:23px;top:1035px;width:158px;height:6px;border:1px solid #cfe8cc;border-bottom:none;border-radius:3px 3px 0 0;background:linear-gradient(180deg,#e0f0dc,#a8d0a0)"></div>
<div class="a" style="left:185px;top:1035px;width:158px;height:6px;border:1px solid #cfe8cc;border-bottom:none;border-radius:3px 3px 0 0;background:linear-gradient(180deg,#e0f0dc,#a8d0a0)"></div>
<div class="a" style="left:347px;top:1035px;width:158px;height:6px;border:1px solid #cfe8cc;border-bottom:none;border-radius:3px 3px 0 0;background:linear-gradient(180deg,#e0f0dc,#a8d0a0)"></div>
<div class="a" style="left:773px;top:1037px;width:19px;height:4px;border-radius:4px 4px 0 0;background:#4a9ae8"></div>
<div class="a" style="left:807px;top:1036px;width:2px;height:5px;background:#f0f0f0"></div>
<div class="a" style="left:845px;top:1038px;width:18px;height:3px;border-radius:3px 3px 0 0;background:#d06020"></div>
<div class="a" style="left:879px;top:1038px;width:15px;height:3px;background:#e8e8e8"></div>
<div class="a" style="left:964px;top:1038px;width:17px;height:3px;border-radius:2px 2px 0 0;background:#f0f0f0"></div>
<div class="a" style="left:1032px;top:1038px;width:16px;height:3px;border-radius:3px 3px 0 0;background:#1a4a7a"></div>
</body></html>
